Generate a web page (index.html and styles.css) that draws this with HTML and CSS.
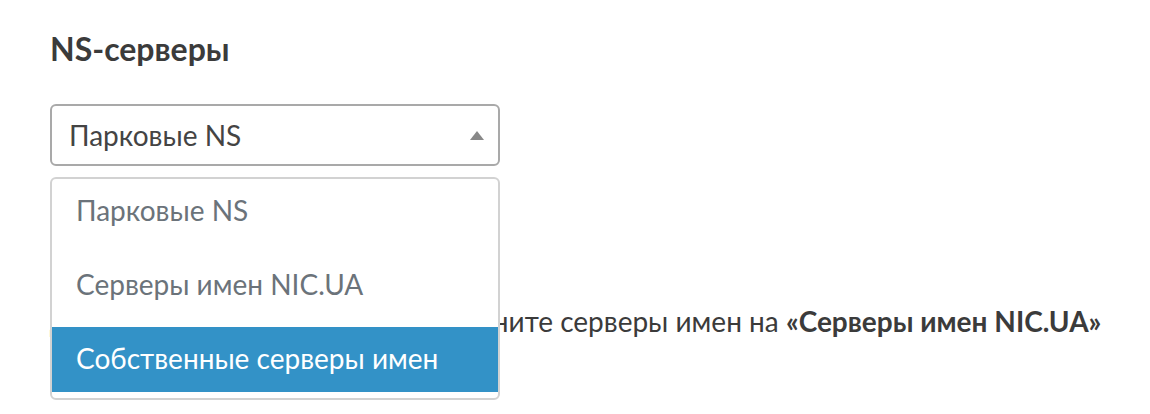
FILE: index.html
```html
<!DOCTYPE html>
<html lang="ru">
<head>
  <meta charset="UTF-8">
  <title>NS-серверы</title>
  <link rel="stylesheet" href="styles.css">
</head>
<body>

  <main class="section">
    <h2 class="section-title">NS-серверы</h2>

    <div class="ns-select">
      <div class="select-box">
        <span class="select-value">Парковые NS</span>
        <span class="select-arrow"></span>
      </div>

      <div class="select-dropdown">
        <ul class="select-menu">
          <li class="select-option">Парковые NS</li>
          <li class="select-option">Серверы имен NIC.UA</li>
          <li class="select-option active">Собственные серверы имен</li>
        </ul>
      </div>
    </div>

    <p class="hint">Для работы с DNS-записями измените серверы имен на <strong>«Серверы имен NIC.UA»</strong></p>
  </main>

</body>
</html>
```

FILE: styles.css
```css
:root {
  --text-color: #3b3b3b;
  --muted: #6b737a;
  --border: #a9a9a9;
  --menu-border: #d2d2d2;
  --accent: #3392c7;
}

body {
  font-family: 'Lato', 'Noto Sans', sans-serif;
  margin: 0;
  padding: 0;
  min-height: 100vh;
  background-color: #fff;
  color: var(--text-color);
}

.section {
  padding: 29px 50px 0;
}

.section-title {
  margin: 0;
  font-size: 32px;
  font-weight: bold;
  line-height: 40px;
}

.ns-select {
  position: relative;
  width: 450px;
  margin-top: 35px;
}

.select-box {
  display: flex;
  align-items: center;
  justify-content: space-between;
  height: 58px;
  padding: 0 14px 0 17px;
  border: 2px solid var(--border);
  border-radius: 6px;
  font-size: 28px;
  color: #444;
}

.select-arrow {
  width: 0;
  height: 0;
  border-left: 7px solid transparent;
  border-right: 7px solid transparent;
  border-bottom: 9px solid #888;
}

.select-dropdown {
  position: absolute;
  top: 73px;
  left: 0;
  right: 0;
  padding-bottom: 6px;
  background-color: #fff;
  border: 2px solid var(--menu-border);
  border-radius: 6px;
}

.select-menu {
  margin: 0;
  padding: 0;
  list-style: none;
  height: 213px;
  overflow: hidden;
}

.select-option {
  height: 74px;
  padding: 0 24px;
  line-height: 62px;
  font-size: 28px;
  color: var(--muted);
}

.select-option.active {
  background-color: var(--accent);
  color: #fff;
}

.hint {
  margin: 138px 0 0;
  font-size: 28px;
  line-height: 34px;
  white-space: nowrap;
}

.hint strong {
  font-weight: bold;
}
```
